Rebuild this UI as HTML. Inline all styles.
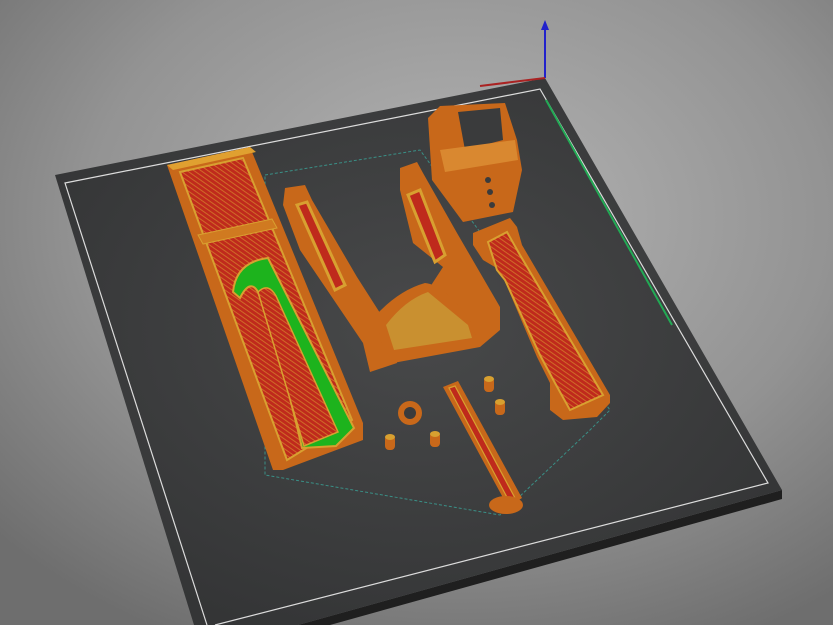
<!DOCTYPE html>
<html><head><style>
html,body{margin:0;padding:0;width:833px;height:625px;overflow:hidden;background:#8a8a8a}
</style></head><body>
<svg width="833" height="625" viewBox="0 0 833 625" xmlns="http://www.w3.org/2000/svg">
<defs>
<radialGradient id="bg" cx="0.55" cy="0.35" r="0.75">
<stop offset="0" stop-color="#b4b4b4"/><stop offset="0.6" stop-color="#939393"/><stop offset="1" stop-color="#6e6e6e"/>
</radialGradient>
<radialGradient id="bed" cx="0.5" cy="0.45" r="0.6">
<stop offset="0" stop-color="#48494a"/><stop offset="1" stop-color="#343536"/>
</radialGradient>
<pattern id="hat" width="4" height="4" patternUnits="userSpaceOnUse" patternTransform="rotate(35)">
<rect width="4" height="4" fill="#bf2a1c"/><rect width="4" height="1" fill="#d06a28"/>
</pattern>
</defs>
<rect width="833" height="625" fill="url(#bg)"/>
<!-- bed -->
<polygon points="298,625 782,490 782,499 330,625" fill="#1f1f1f"/>
<polygon points="55,175 545,78 782,490 298,625 194,625" fill="url(#bed)"/>
<polyline points="207,625 65,183 540,89 768,483 215,625" fill="none" stroke="#dcdcdc" stroke-width="1.2"/>
<!-- dashed hull -->
<polygon points="265,175 420,150 610,410 590,430 500,515 265,475" fill="none" stroke="#3a8f86" stroke-width="1" stroke-dasharray="3,2"/>
<!-- axes -->
<line x1="545" y1="78" x2="545" y2="28" stroke="#2222cc" stroke-width="2"/>
<polygon points="541,30 549,30 545,20" fill="#2222cc"/>
<line x1="480" y1="86" x2="545" y2="78" stroke="#aa2222" stroke-width="2"/>
<line x1="546" y1="100" x2="672" y2="325" stroke="#22aa55" stroke-width="2"/>
<!-- big left part -->
<polygon points="167,165 250,147 363,423 363,440 283,470 273,470" fill="#c8681a"/>
<polygon points="167,165 250,147 256,152 173,170" fill="#e0a030"/>
<polygon points="180,172 243,158 352,420 287,460" fill="url(#hat)" stroke="#d8a030" stroke-width="2"/>
<polygon points="198,235 272,219 277,228 203,244" fill="#d07a20" stroke="#d8a030" stroke-width="1"/>
<path d="M233,292 Q236,262 268,258 L354,428 L336,446 L302,448 Q282,360 258,292 Q250,278 240,298 Z" fill="#1db31d" stroke="#d8a030" stroke-width="2"/>
<path d="M258,292 Q268,282 276,296 L338,432 L304,446 Z" fill="url(#hat)" stroke="#d8a030" stroke-width="1.5"/>
<!-- U part -->
<polygon points="285,188 305,185 312,200 357,277 380,313 395,345 397,363 370,372 363,343 300,250 283,205" fill="#c8681a"/>
<polygon points="297,205 307,202 345,285 335,290" fill="#bf2a1c" stroke="#d8a030" stroke-width="3"/>
<polygon points="400,168 417,162 423,173 457,233 500,307 500,330 480,347 468,345 430,287 443,267 413,243 400,190" fill="#c8681a"/>
<polygon points="408,195 420,190 445,255 435,262" fill="#bf2a1c" stroke="#d8a030" stroke-width="3"/>
<path d="M378,313 Q400,290 425,283 Q445,285 470,320 L480,347 L393,363 L380,340 Z" fill="#c8681a"/>
<path d="M386,325 Q405,300 428,292 L468,325 L472,338 L394,350 Z" fill="#c99030"/>
<!-- box -->
<polygon points="428,118 440,106 505,103 517,140 522,170 513,212 463,222 432,180" fill="#c8681a"/>
<polygon points="458,112 500,108 503,140 465,150" fill="#3a3b3c"/>
<polygon points="440,150 515,140 518,160 445,172" fill="#d98830"/>
<circle cx="488" cy="180" r="3" fill="#3a3b3c"/><circle cx="490" cy="192" r="3" fill="#3a3b3c"/><circle cx="492" cy="205" r="3" fill="#3a3b3c"/>
<!-- right long part -->
<polygon points="473,233 510,218 517,227 522,245 610,395 610,403 597,417 563,420 550,410 550,383 537,357 500,270 483,260 473,245" fill="#c8681a"/>
<polygon points="488,242 507,232 520,255 603,395 570,410 555,383 540,355 505,280 497,270" fill="url(#hat)" stroke="#d8a030" stroke-width="2"/>
<!-- pin -->
<polygon points="443,387 458,381 522,498 508,507" fill="#c8681a"/>
<polygon points="449,388 455,386 515,498 509,501" fill="#bf2a1c" stroke="#d8a030" stroke-width="1.2"/>
<ellipse cx="506" cy="505" rx="17" ry="9" fill="#c8681a"/>
<!-- ring & pegs -->
<circle cx="410" cy="413" r="12" fill="#c8681a"/><circle cx="410" cy="413" r="6" fill="#3a3b3c"/>
<rect x="385" y="435" width="10" height="15" rx="4" fill="#c8681a"/><ellipse cx="390" cy="437" rx="5" ry="3" fill="#d8a030"/>
<rect x="430" y="432" width="10" height="15" rx="4" fill="#c8681a"/><ellipse cx="435" cy="434" rx="5" ry="3" fill="#d8a030"/>
<rect x="484" y="377" width="10" height="15" rx="4" fill="#c8681a"/><ellipse cx="489" cy="379" rx="5" ry="3" fill="#d8a030"/>
<rect x="495" y="400" width="10" height="15" rx="4" fill="#c8681a"/><ellipse cx="500" cy="402" rx="5" ry="3" fill="#d8a030"/>
</svg>
</body></html>
